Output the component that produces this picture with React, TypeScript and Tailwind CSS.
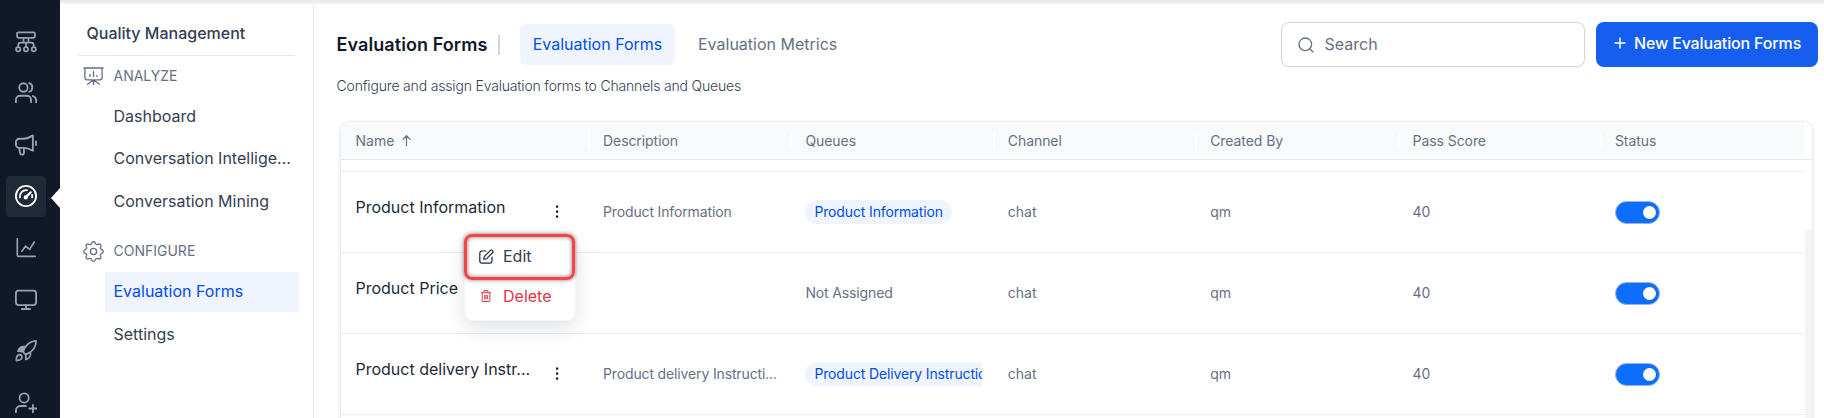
import React from 'react';

type IconProps = { className?: string };

const Svg = ({ className, children, w = 1.5 }: { className?: string; children: React.ReactNode; w?: number }) => (
  <svg viewBox="0 0 24 24" fill="none" stroke="currentColor" strokeWidth={w} strokeLinecap="round" strokeLinejoin="round" className={className}>
    {children}
  </svg>
);

const FlowIcon = ({ className }: IconProps) => (
  <Svg className={className} w={1.9}>
    <rect x="2.2" y="1.4" width="19.6" height="6" rx="1.6" />
    <path d="M9.3 7.4v5M14.7 7.4v5M12 12.6v5M3.6 17.4v-2.2c0-1.5 1-2.6 2.5-2.6h11.8c1.5 0 2.5 1.1 2.5 2.6v2.2" />
    <circle cx="3.5" cy="20" r="2.3" />
    <circle cx="12" cy="20" r="2.3" />
    <circle cx="20.5" cy="20" r="2.3" />
  </Svg>
);
const UsersIcon = ({ className }: IconProps) => (
  <Svg className={className} w={2}>
    <circle cx="9.2" cy="6" r="4.6" />
    <path d="M1 22v-2.500c0-2.600 1.900-4.500 4.500-4.500h7.500c2.600 0 4.500 1.900 4.500 4.500V22M15.500 1.300c2 .6 3.400 2.400 3.400 4.700s-1.400 4.100-3.400 4.700M19.500 15.300c2 .5 3.500 2.300 3.500 4.500V22" />
  </Svg>
);
const HornIcon = ({ className }: IconProps) => (
  <Svg className={className} w={2}>
    <path d="M19.5 1.5v16.800c-3.600-2.200-6.500-3.100-10.300-3.100H4.600C2.600 15.200 1 13.600 1 11.600V8.800c0-2 1.600-3.600 3.600-3.600h4.600c3.800 0 6.700-1.300 10.300-3.700zM4.600 15.200l.8 5.400c.2 1.200 1 1.900 2.200 1.900s2.100-.9 2.100-2.100v-5.200M22.900 8v4" />
  </Svg>
);
const GaugeIcon = ({ className }: IconProps) => (
  <Svg className={className} w={2}>
    <circle cx="12" cy="12" r="11" />
    <path d="M5.300 13.500c-.4-4.700 2.800-8.200 7.700-7.900M18.600 10.800c.3 1 .3 1.900.1 2.700" />
    <circle cx="11.700" cy="13.500" r="1.300" fill="currentColor" />
    <path d="M12.500 12.700l4.700-4.700" strokeWidth="2.400" />
  </Svg>
);
const ChartIcon = ({ className }: IconProps) => (
  <Svg className={className} w={1.8}>
    <path d="M2.500 2v17.300c0 1.200.7 1.900 1.900 1.900H22M7.500 15.500l4-5.500 4.500 3.500 5-8" />
  </Svg>
);
const MonitorIcon = ({ className }: IconProps) => (
  <Svg className={className} w={2}>
    <rect x="1" y="1.7" width="22" height="15.8" rx="3" />
    <path d="M12 17.500v4M7.500 21.800h9" />
  </Svg>
);
const RocketIcon = ({ className }: IconProps) => (
  <Svg className={className} w={1.9}>
    <path d="M9 13.200c1-5.400 5.400-11.600 14-12.200-.3 8.600-6.200 13.600-12 14.600zM11.800 16l5-2.800c.8 4.100-1.600 7.200-5 8zM1.600 22.500c-.4-3.600.6-6 3.400-6.500 1.700 0 2.700 1.200 2.600 2.800-.4 2.600-2.700 3.700-6 3.700z" />
    <path d="M3.200 12.200C4.400 8.600 7 6.700 10.800 7.200L8 12.800z" fill="currentColor" />
  </Svg>
);
const UserPlusIcon = ({ className }: IconProps) => (
  <Svg className={className} w={2}>
    <circle cx="10" cy="6.500" r="5" />
    <path d="M1 22v-1.500C1 17.500 3 15.300 6 15.300h6M19.500 14v8M15.500 18h8" />
  </Svg>
);
const BoardIcon = ({ className }: IconProps) => (
  <Svg className={className} w={1.5}>
    <path d="M1 2.300h22M2.200 2.300v11.200c0 1.400.9 2.300 2.300 2.300h15c1.400 0 2.300-.9 2.300-2.300V2.300M12 15.800v5.200M11.500 16.200l-6.300 4.600M12.500 16.200l6.300 4.600M8 9.500v2.600M12 6.500v5.600M16 10.800v1.300" />
  </Svg>
);
const GearIcon = ({ className }: IconProps) => (
  <Svg className={className} w={1.5}>
    <circle cx="12" cy="12" r="3.5" />
    <path d="M10.080 2.070 A2.100 2.100 0 0 1 13.920 2.070 A2.300 2.300 0 0 0 17.660 3.620 A2.100 2.100 0 0 1 20.380 6.340 A2.300 2.300 0 0 0 21.930 10.080 A2.100 2.100 0 0 1 21.930 13.920 A2.300 2.300 0 0 0 20.380 17.660 A2.100 2.100 0 0 1 17.660 20.380 A2.300 2.300 0 0 0 13.920 21.930 A2.100 2.100 0 0 1 10.080 21.930 A2.300 2.300 0 0 0 6.340 20.380 A2.100 2.100 0 0 1 3.620 17.660 A2.300 2.300 0 0 0 2.070 13.920 A2.100 2.100 0 0 1 2.070 10.080 A2.300 2.300 0 0 0 3.620 6.340 A2.100 2.100 0 0 1 6.340 3.620 A2.300 2.300 0 0 0 10.080 2.070Z" />
  </Svg>
);

const railIcons = [FlowIcon, UsersIcon, HornIcon, GaugeIcon, ChartIcon, MonitorIcon, RocketIcon, UserPlusIcon];

function Rail() {
  return (
    <nav className="relative flex h-[418px] w-[60px] shrink-0 flex-col gap-[10.6px] overflow-hidden bg-[#111827] pl-1.5 pt-[21.2px] text-[#98a2b3]">
      {railIcons.map((Icon, i) => (
        <div key={i} className={`flex h-[41px] w-10 shrink-0 items-center justify-center rounded ${i === 3 ? 'bg-[#1f2a37] text-white' : ''}`}>
          <Icon className="h-[22px] w-[22px]" />
        </div>
      ))}
      <svg className="absolute right-0 top-[188px] h-5 w-[9px]" viewBox="0 0 9 20">
        <path d="M9 0v20L0 10z" fill="#fff" />
      </svg>
    </nav>
  );
}

const SideItem = ({ label, active = false }: { label: string; active?: boolean }) => (
  <div className={`ml-[45px] flex h-10 w-[194px] items-center pb-[3px] pl-[8.5px] text-base ${active ? 'bg-[#eff4ff] text-[#004eeb]' : 'text-[#344054]'}`}>
    {label}
  </div>
);

function Sidebar() {
  return (
    <aside className="flex h-[418px] w-[254px] shrink-0 flex-col border-r border-[#e4e7ec]">
      <h2 className="ml-[18px] flex h-14 w-[217px] items-center border-b border-[#e4e7ec] pl-[8.5px] pt-[10px] text-base font-medium text-[#344054]">
        Quality Management
      </h2>
      <div className="mt-[10px] flex h-5 items-center gap-[9.5px] pl-[23px] text-sm text-[#667085]">
        <BoardIcon className="h-[21px] w-[21px]" />
        ANALYZE
      </div>
      <div className="mt-[11px] flex flex-col">
        <SideItem label="Dashboard" />
        <div className="mt-0.5">
          <SideItem label="Conversation Intellige..." />
        </div>
        <div className="mt-[3px]">
          <SideItem label="Conversation Mining" />
        </div>
      </div>
      <div className="mt-[19px] flex h-5 items-center gap-[9.5px] pl-[23px] text-sm text-[#667085]">
        <GearIcon className="h-[21px] w-[21px]" />
        CONFIGURE
      </div>
      <div className="mt-[11px] flex flex-col gap-[3px]">
        <SideItem label="Evaluation Forms" active />
        <SideItem label="Settings" />
      </div>
    </aside>
  );
}

function Header() {
  return (
    <header className="flex h-[122px] items-start pl-[22.5px] pr-1.5 pt-[22px]">
      <div className="flex grow flex-col">
        <div className="mt-0.5 flex h-[41px] items-center">
          <h1 className="w-[161.5px] whitespace-nowrap text-lg font-semibold tracking-[0.08px] text-[#101828]">Evaluation Forms</h1>
          <span className="h-5 w-0.5 bg-[#d0d5dd]" />
          <span className="ml-5 flex h-[41px] w-[155px] items-center justify-center rounded-md bg-[#eff4ff] pb-0.5 text-base text-[#004eeb]">
            Evaluation Forms
          </span>
          <span className="ml-[23px] pb-0.5 text-base text-[#667085]">Evaluation Metrics</span>
        </div>
        <p className="mt-[11px] text-sm font-light tracking-[-0.175px] text-[#344054]">
          Configure and assign Evaluation forms to Channels and Queues
        </p>
      </div>
      <div className="flex h-[45px] w-[304px] items-center rounded-lg border border-[#d0d5dd] pl-4 text-base text-[#667085] shadow-[0_1px_2px_rgba(16,24,40,0.05)]">
        <svg className="mr-[10.5px] h-4 w-4" viewBox="0 0 16 16" fill="none" stroke="currentColor" strokeWidth="1.300" strokeLinecap="round">
          <circle cx="7.300" cy="7.300" r="6.300" />
          <path d="M12 12l3 3" />
        </svg>
        <span className="pb-0.5">Search</span>
      </div>
      <button className="ml-[11px] flex h-[45px] w-[222px] items-center rounded-lg bg-[#155eef] pb-[3px] pl-[18px] text-base font-medium tracking-[-0.15px] text-white">
        <svg className="mr-2 h-3 w-3" viewBox="0 0 12 12" stroke="currentColor" strokeWidth="1.500" strokeLinecap="round">
          <path d="M6 1v10M1 6h10" />
        </svg>
        New Evaluation Forms
      </button>
    </header>
  );
}

const grid = 'grid w-[1463px] grid-cols-[247px_202.4px_202.4px_202.4px_202.4px_202.4px_1fr]';

const rows = [
  { name: 'Product Information', menu: true, desc: 'Product Information', queue: 'Product Information' },
  { name: 'Product Price', menu: false, desc: '', queue: '' },
  { name: 'Product delivery Instr...', menu: true, desc: 'Product delivery Instructi...', queue: 'Product Delivery Instructions' },
];

const headings = ['Description', 'Queues', 'Channel', 'Created By', 'Pass Score', 'Status'];

function Table() {
  return (
    <div className="relative ml-[27px] h-[320px] w-[1471px] rounded-t-lg bg-white shadow-[0_1px_4px_rgba(16,24,40,0.200)]">
      <div className="h-[38px] rounded-t-lg border-b border-[#e4e7ec]">
        <div className={`${grid} h-[37px] items-center rounded-tl-lg bg-[#f9fafb] text-sm text-[#667085]`}>
          <div className="flex items-center pl-[14.5px]">
            Name
            <svg className="ml-2 h-[11px] w-[9px]" viewBox="0 0 9 11" fill="none" stroke="currentColor" strokeWidth="1.200" strokeLinecap="round" strokeLinejoin="round">
              <path d="M4.500 10.400V.8M.9 4.300L4.500.7l3.600 3.600" />
            </svg>
          </div>
          {headings.map((h) => (
            <div key={h} className="flex h-[18px] items-center border-l-2 border-white pl-[13px] tracking-[-0.07px]">{h}</div>
          ))}
        </div>
      </div>
      <div className="h-[12px] w-[1463px] border-b border-[#e9ebee]" />
      {rows.map((r) => (
        <div key={r.name} className={`${grid} h-[81px] items-center border-b border-[#e9ebee] text-sm tracking-[-0.14px] text-[#667085]`}>
          <div className="flex items-center pl-[14.5px]">
            <span className="mb-[11px] w-[197.5px] whitespace-nowrap text-base tracking-normal text-[#1d2939]">{r.name}</span>
            {r.menu && (
              <svg className="h-4 w-2" viewBox="0 0 8 16" fill="#101828">
                <rect x="3" y="1.500" width="2.200" height="2.200" />
                <rect x="3" y="6.500" width="2.200" height="2.200" />
                <rect x="3" y="11.500" width="2.200" height="2.200" />
              </svg>
            )}
          </div>
          <div className="pl-[15px]">{r.desc}</div>
          <div className="mr-[11px] overflow-hidden pl-[15px]">
            {r.queue ? (
              <span className="flex h-6 w-max items-center rounded-full bg-[#eff4ff] px-[9px] text-[#004eeb]">{r.queue}</span>
            ) : (
              'Not Assigned'
            )}
          </div>
          <div className="pl-[15px] tracking-normal">chat</div>
          <div className="pl-[15px] tracking-normal">qm</div>
          <div className="pl-[15px] tracking-normal">40</div>
          <div className="pl-[15px]">
            <span className="flex h-[23px] w-[45px] items-center justify-end rounded-full border border-[#98b4de] bg-[#0d6efd] pr-[3px]">
              <span className="h-[13px] w-[13px] rounded-full bg-white" />
            </span>
          </div>
        </div>
      ))}
      <div className="absolute right-0 top-[108px] h-[240px] w-[7px] rounded-full bg-[#f2f4f7]" />
      <div className="absolute left-[123px] top-[112px] h-[87px] w-[112px] rounded-lg border border-[#f2f4f7] bg-white shadow-[0_8px_20px_rgba(16,24,40,0.120)]">
        <div className="-ml-px -mt-px flex h-[46px] w-[111px] items-center rounded-lg border-[3px] border-[#fb4346] pb-px pl-[11.5px] text-base text-[#344054] shadow-[0_0_4px_rgba(0,0,0,0.500),inset_0_0_4px_rgba(0,0,0,0.500)]">
          <svg className="mr-[9.5px] h-[15px] w-[15px]" viewBox="0 0 15 15" fill="none" stroke="#1d2939" strokeWidth="1.200" strokeLinecap="round" strokeLinejoin="round">
            <path d="M7 2H3C1.600 2 .8 2.800.8 4.200V12c0 1.400.8 2.200 2.200 2.200h7.800c1.400 0 2.200-.8 2.200-2.200V8" />
            <path d="M4.800 10.200l.4-2.600 6.300-6.300c.5-.5 1.200-.5 1.700 0l.5.5c.5.5.5 1.200 0 1.700L7.400 9.800z" />
          </svg>
          <span className="pb-0.5">Edit</span>
        </div>
        <div className="flex h-8 items-center pl-4 text-base text-[#e0354b]">
          <svg className="mr-3 h-3 w-[10px]" viewBox="0 0 10 12" fill="none" stroke="currentColor" strokeWidth="1" strokeLinejoin="round">
            <path d="M0 2.700h10M3 2.500V.6h4v1.900M1.200 2.700v8c0 .5.300.8.8.8h6c.5 0 .8-.3.8-.8v-8M3.700 5v4.300M6.300 5v4.300M5 5v4.300" />
          </svg>
          Delete
        </div>
      </div>
    </div>
  );
}

export default function App() {
  return (
    <div className="relative flex h-[418px] w-[1824px] overflow-hidden bg-white font-['Inter',sans-serif]">
      <Rail />
      <Sidebar />
      <main className="h-[418px] w-[1510px]">
        <Header />
        <Table />
      </main>
      <div className="absolute left-[60px] right-0 top-0 h-[5px] bg-gradient-to-b from-[#e9e9e9] via-[#efefef] to-white" />
    </div>
  );
}
